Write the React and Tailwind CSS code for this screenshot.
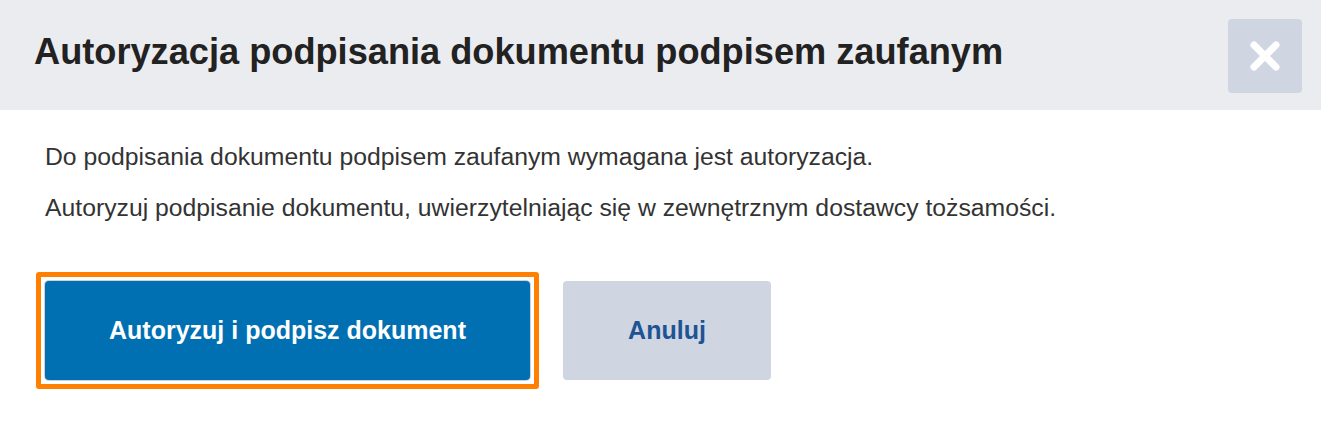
export default function App() {
  return (
    <div className="w-[1321px] h-[425px] bg-white font-['Liberation_Sans',Arial,sans-serif] overflow-hidden">
      <div className="h-[110px] bg-[#ebecf0] flex items-start justify-between pl-[34px] pr-[19px]">
        <h1 className="mt-[32px] text-[36.2px] leading-[40px] font-bold text-[#222222]">
          Autoryzacja podpisania dokumentu podpisem zaufanym
        </h1>
        <button className="mt-[19px] w-[74px] h-[74px] rounded bg-[#d0d5e2] flex items-center justify-center">
          <svg width="32" height="32" viewBox="0 0 32 32" fill="none" stroke="white" strokeWidth="7" strokeLinecap="round">
            <path d="M5 5 L27 27 M27 5 L5 27" />
          </svg>
        </button>
      </div>
      <div className="pl-[45px] pt-[32px]">
        <p className="text-[24.75px] text-[#333333] leading-[30px]">
          Do podpisania dokumentu podpisem zaufanym wymagana jest autoryzacja.
        </p>
        <p className="text-[24.75px] text-[#333333] leading-[30px] mt-[21px]">
          Autoryzuj podpisanie dokumentu, uwierzytelniając się w zewnętrznym dostawcy tożsamości.
        </p>
        <div className="flex items-start gap-[24px] mt-[49px] -ml-[9px]">
          <div className="border-[5px] border-[#ff8000] rounded-[3px] p-[4px]">
            <button className="block w-[485px] h-[99px] rounded bg-[#0070b3] text-white text-[25px] font-bold ring-1 ring-[#8a8f99]/40">
              Autoryzuj i podpisz dokument
            </button>
          </div>
          <button className="mt-[9px] w-[208px] h-[99px] rounded bg-[#d0d5e2] text-[#1c5494] text-[25px] font-bold">
            Anuluj
          </button>
        </div>
      </div>
    </div>
  );
}
